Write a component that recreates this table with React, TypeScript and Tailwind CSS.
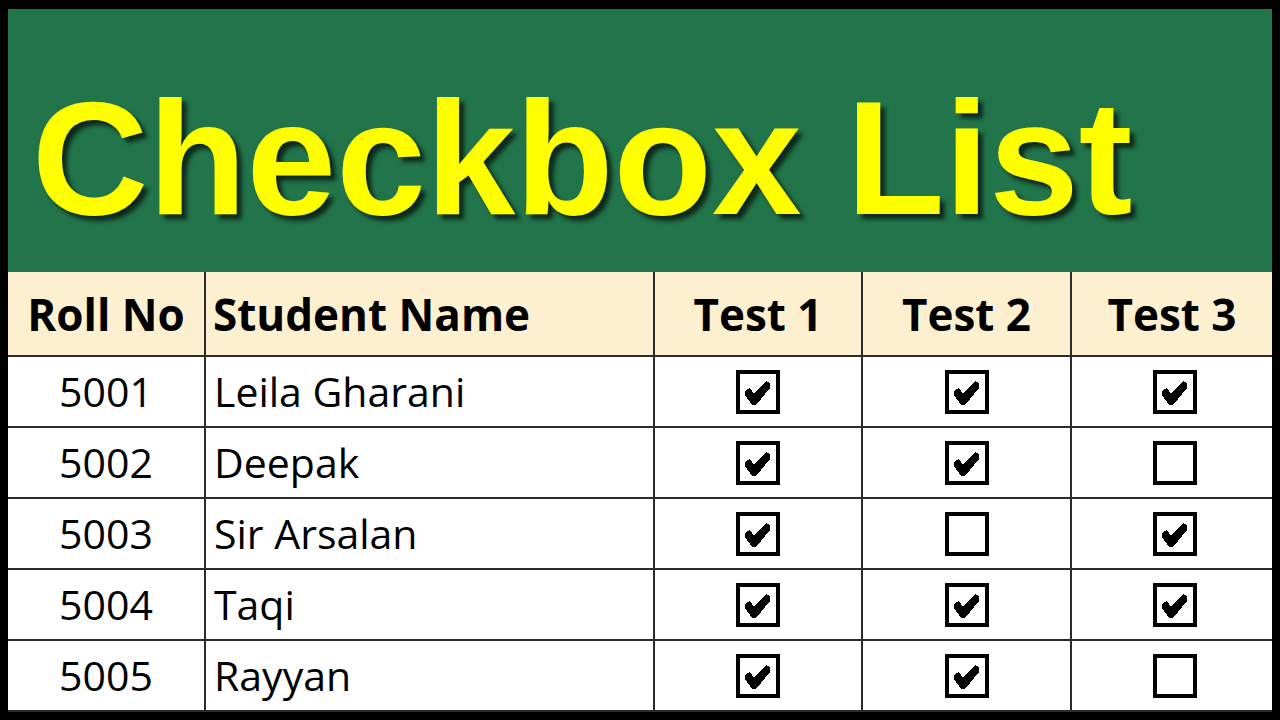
import { FC } from "react";

type Row = { roll: string; name: string; tests: boolean[] };

const rows: Row[] = [
  { roll: "5001", name: "Leila Gharani", tests: [true, true, true] },
  { roll: "5002", name: "Deepak", tests: [true, true, false] },
  { roll: "5003", name: "Sir Arsalan", tests: [true, false, true] },
  { roll: "5004", name: "Taqi", tests: [true, true, true] },
  { roll: "5005", name: "Rayyan", tests: [true, true, false] },
];

const CheckBox: FC<{ checked: boolean }> = ({ checked }) => (
  <svg width="44" height="44" viewBox="0 0 44 44" shapeRendering="crispEdges">
    <rect x="2" y="2" width="40" height="40" fill="#fff" stroke="#000" strokeWidth="4" />
    {checked && (
      <polygon
        points="9,21 14,18 18,24 30,11 34,13 34,18 20,35 16,35 9,25"
        fill="#000"
      />
    )}
  </svg>
);

const cell = "border-r-2 border-b-2 border-[#2b2b2b] flex items-center";
const head = "h-[85px] bg-[#fdf0d0] text-[44px] font-bold";
const body = "h-[71px] text-[41px]";

const App: FC = () => {
  return (
    <div className="w-[1280px] h-[720px] bg-black pt-[9px] pl-[8px] pr-[8px] overflow-hidden">
      <div className="w-[1264px] h-[263px] bg-[#22744a] pt-[69px] pl-[24px]">
        <div className="font-['Liberation_Sans',Arial,sans-serif] font-bold text-[#ffff00] text-[161px] leading-none whitespace-nowrap [text-shadow:5px_5px_4px_rgba(0,0,0,0.65)]">
          Checkbox List
        </div>
      </div>
      <div className="w-[1264px] bg-white grid grid-cols-[198px_449px_208px_209px_200px] font-['Open_Sans',sans-serif] text-black">
        <div className={`${cell} ${head} justify-center`}>Roll No</div>
        <div className={`${cell} ${head} pl-[7px]`}>Student Name</div>
        <div className={`${cell} ${head} justify-center`}>Test 1</div>
        <div className={`${cell} ${head} justify-center`}>Test 2</div>
        <div className={`border-b-2 border-[#2b2b2b] flex items-center ${head} justify-center`}>Test 3</div>
        {rows.map((r) => (
          <div key={r.roll} className="contents">
            <div className={`${cell} ${body} justify-center`}>{r.roll}</div>
            <div className={`${cell} ${body} pl-[8px]`}>{r.name}</div>
            <div className={`${cell} h-[71px] justify-center`}>
              <CheckBox checked={r.tests[0]} />
            </div>
            <div className={`${cell} h-[71px] justify-center`}>
              <CheckBox checked={r.tests[1]} />
            </div>
            <div className="border-b-2 border-[#2b2b2b] flex items-center h-[71px] justify-center pl-[6px]">
              <CheckBox checked={r.tests[2]} />
            </div>
          </div>
        ))}
      </div>
    </div>
  );
};

export default App;
